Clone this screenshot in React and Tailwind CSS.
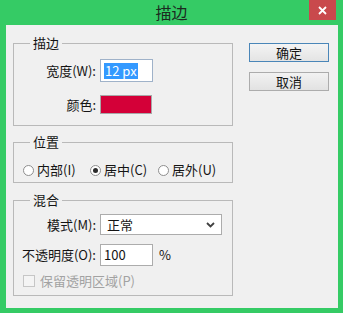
import React from 'react';

const Group = ({ title, className, children }) => (
  <fieldset className={`w-[220px] border border-[#b9b9b9] ${className}`}>
    <legend className="ml-[16px] px-[3px] leading-[16px]">{title}</legend>
    {children}
  </fieldset>
);

const Radio = ({ checked, label, className }) => (
  <label className={`flex items-center gap-[3px] ${className}`}>
    <span className="flex h-[11px] w-[11px] items-center justify-center rounded-full border border-[#8e8e8e] bg-white">
      {checked && <span className="h-[5px] w-[5px] rounded-full bg-[#2b2b2b]" />}
    </span>
    <span>{label}</span>
  </label>
);

const FieldRow = ({ label, className, children }) => (
  <div className={`flex items-center ${className}`}>
    <span className="w-[82px] text-right">{label}</span>
    <div className="ml-[4px] flex items-center">{children}</div>
  </div>
);

export default function App() {
  return (
    <div className="flex h-[313px] w-[343px] flex-col bg-[#35cb65] font-['Noto_Sans_CJK_SC',sans-serif] text-[13px] leading-[16px] text-[#141414]">
      {/* Title bar */}
      <div className="grid h-[25px] grid-cols-[1fr_auto_1fr] items-start">
        <div />
        <div className="pt-[2px] text-[16px] leading-[20px] text-[#1c2a1f]">描边</div>
        <div className="flex justify-end pr-[7px]">
          <button className="flex h-[20px] w-[27px] items-center justify-center bg-[#c9494c] text-white">
            <svg width="9" height="9" viewBox="0 0 9 9">
              <path d="M1 1 L8 8 M8 1 L1 8" stroke="white" strokeWidth="1.8" />
            </svg>
          </button>
        </div>
      </div>

      {/* Body */}
      <div className="mb-[5px] ml-[6px] mr-[5px] flex flex-1 bg-[#f0f0f0] pl-[7px] pr-[9px] pt-[10px]">
        <div className="flex flex-col">
          <Group title="描边">
            <FieldRow label="宽度(W):" className="mt-[8px]">
              <div className="flex h-[23px] w-[53px] items-center border border-[#9fb2c9] bg-white pl-[3px]">
                <span className="bg-[#3399ff] px-[1px] text-white">12 px</span>
              </div>
            </FieldRow>
            <FieldRow label="颜色:" className="mt-[13px] mb-[11px]">
              <div className="h-[19px] w-[52px] border border-[#a8a8a8] bg-[#d40038]" />
            </FieldRow>
          </Group>

          <Group title="位置" className="mt-[8px]">
            <div className="mt-[12px] mb-[4px] flex h-[16px] items-center pl-[9px]">
              <Radio label="内部(I)" className="w-[67px]" />
              <Radio label="居中(C)" checked className="w-[68px]" />
              <Radio label="居外(U)" />
            </div>
          </Group>

          <Group title="混合" className="mt-[9px]">
            <FieldRow label="模式(M):" className="mt-[6px]">
              <div className="flex h-[21px] w-[122px] items-center justify-between border border-[#acacac] bg-white pl-[6px] pr-[6px]">
                <span>正常</span>
                <svg width="9" height="6" viewBox="0 0 9 6">
                  <path d="M1 1 L4.5 4.5 L8 1" stroke="#404040" strokeWidth="1.8" fill="none" />
                </svg>
              </div>
            </FieldRow>
            <FieldRow label="不透明度(O):" className="mt-[9px]">
              <div className="flex h-[22px] w-[53px] items-center border border-[#acacac] bg-white pl-[3px]">
                100
              </div>
              <span className="ml-[6px]">%</span>
            </FieldRow>
            <div className="mt-[7px] mb-[6px] flex h-[16px] items-center gap-[5px] pl-[9px] text-[#a2a2a2]">
              <span className="h-[12px] w-[12px] border border-[#c6c6c6] bg-[#f4f4f4]" />
              <span>保留透明区域(P)</span>
            </div>
          </Group>
        </div>

        <div className="ml-[16px] mt-[8px] flex flex-col gap-[10px]">
          <button className="h-[19px] w-[80px] border border-[#4a86b8] bg-gradient-to-b from-[#f4f4f4] to-[#e4e4e4] text-[13px] leading-[16px]">
            确定
          </button>
          <button className="h-[19px] w-[80px] border border-[#acacac] bg-gradient-to-b from-[#f2f2f2] to-[#e2e2e2] text-[13px] leading-[16px]">
            取消
          </button>
        </div>
      </div>
    </div>
  );
}
